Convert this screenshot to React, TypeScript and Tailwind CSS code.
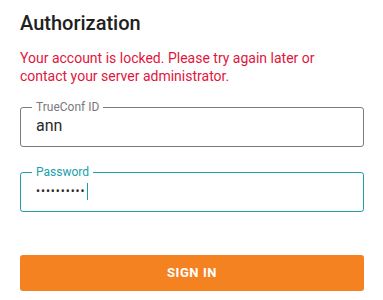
import React from "react";

export default function App() {
  return (
    <div
      className="w-[383px] h-[300px] bg-white pl-5 pr-[19px] pt-[11px]"
      style={{ fontFamily: "Roboto, 'Noto Sans', sans-serif" }}
    >
      <h1 className="text-[20px] leading-6 font-medium text-[#212121]">Authorization</h1>
      <p className="mt-[14px] text-[14px] leading-[18px] text-[#e0163c]">
        Your account is locked. Please try again later or contact your server administrator.
      </p>
      <fieldset className="mt-[15px] border border-[#7b7b7b] rounded-[3px] px-[11px] pb-[8px]">
        <legend className="px-[4px] text-[12px] leading-[14px] text-[#7a7a7a]">TrueConf ID</legend>
        <div className="pl-[4px] h-6 text-[16px] leading-6 text-[#2a2a2a]">ann</div>
      </fieldset>
      <fieldset className="mt-[18px] border border-[#17a0ac] rounded-[3px] px-[11px] pb-[8px]">
        <legend className="px-[4px] text-[12px] leading-[14px] text-[#17a0ac]">Password</legend>
        <div className="pl-[4px] h-6 flex items-center text-[#2a2a2a]">
          <span className="text-[12px] leading-6 tracking-[0.9px]">••••••••••</span>
          <span className="ml-[1px] w-px h-[17px] bg-[#17a0ac]" />
        </div>
      </fieldset>
      <button className="mt-[43px] w-full h-9 rounded-[3px] bg-[#f58220] text-white text-[13px] font-bold tracking-[0.6px]">
        SIGN IN
      </button>
    </div>
  );
}
